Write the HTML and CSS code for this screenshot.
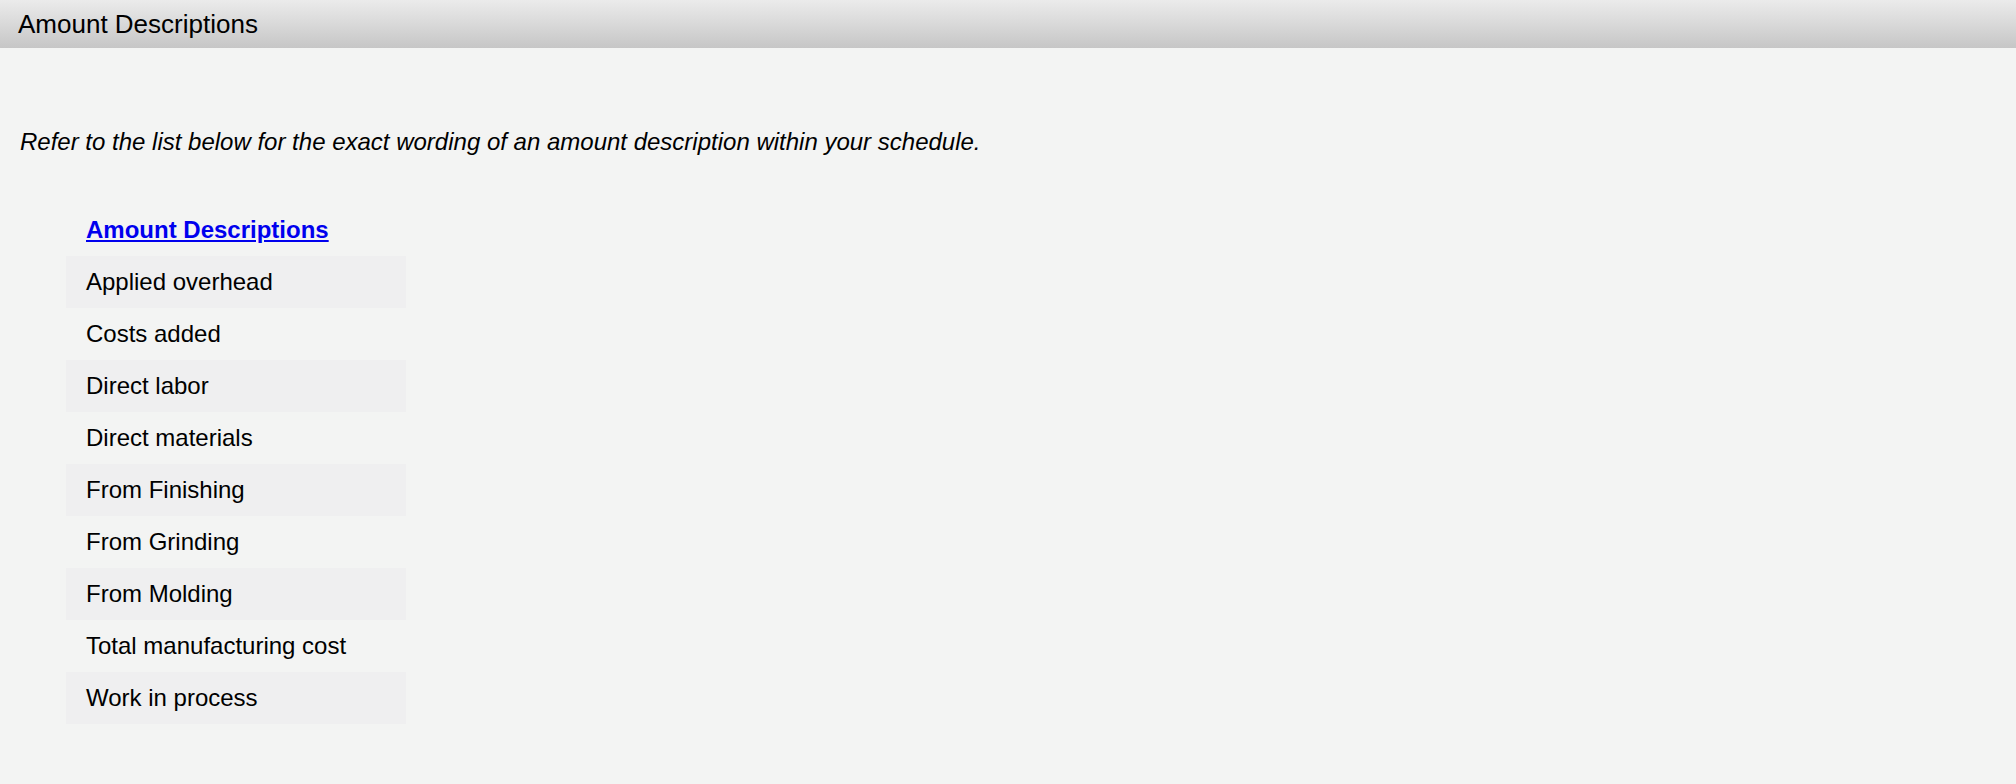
FILE: index.html
```html
<!DOCTYPE html>
<html>
<head>
<meta charset="utf-8">
<title>Amount Descriptions</title>
<link rel="stylesheet" href="styles.css">
</head>
<body>
<div class="titlebar">Amount Descriptions</div>
<main class="content">
  <p class="intro">Refer to the list below for the exact wording of an amount description within your schedule.</p>
  <div class="desc-table">
    <div class="desc-head"><a href="#" class="desc-link">Amount Descriptions</a></div>
    <div class="desc-row shaded">Applied overhead</div>
    <div class="desc-row">Costs added</div>
    <div class="desc-row shaded">Direct labor</div>
    <div class="desc-row">Direct materials</div>
    <div class="desc-row shaded">From Finishing</div>
    <div class="desc-row">From Grinding</div>
    <div class="desc-row shaded">From Molding</div>
    <div class="desc-row">Total manufacturing cost</div>
    <div class="desc-row shaded">Work in process</div>
  </div>
</main>
</body>
</html>
```
FILE: styles.css
```css
html, body {
  margin: 0;
  padding: 0;
}
body {
  background: #f3f4f3;
  font-family: "Liberation Sans", Arial, sans-serif;
  color: #000;
}
.titlebar {
  height: 48px;
  line-height: 48px;
  padding-left: 18px;
  font-size: 26px;
  background: linear-gradient(to bottom, #ebebeb 0%, #d9d9d9 50%, #c6c6c6 100%);
}
.content {
  padding-top: 80px;
}
.intro {
  margin: 0 0 48px 0;
  padding-left: 20px;
  font-size: 24px;
  line-height: 28px;
  font-style: italic;
}
.desc-table {
  margin-left: 66px;
  width: 340px;
}
.desc-head,
.desc-row {
  height: 52px;
  line-height: 52px;
  padding-left: 20px;
  font-size: 24px;
}
.desc-link {
  color: #0000ee;
  font-weight: bold;
  text-decoration: underline;
}
.shaded {
  background: #efeff0;
}
```
